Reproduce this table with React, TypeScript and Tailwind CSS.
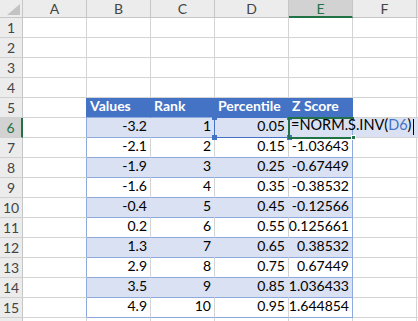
import React from "react";

const cols = ["A", "B", "C", "D", "E", "F", ""];
const colW = ["w-[64px]", "w-[64px]", "w-[64px]", "w-[74px]", "w-[64px]", "w-[64px]", "w-[64px]"];

const rows = [
  ["-3.2", "1", "0.05", ""],
  ["-2.1", "2", "0.15", "-1.03643"],
  ["-1.9", "3", "0.25", "-0.67449"],
  ["-1.6", "4", "0.35", "-0.38532"],
  ["-0.4", "5", "0.45", "-0.12566"],
  ["0.2", "6", "0.55", "0.125661"],
  ["1.3", "7", "0.65", "0.38532"],
  ["2.9", "8", "0.75", "0.67449"],
  ["3.5", "9", "0.85", "1.036433"],
  ["4.9", "10", "0.95", "1.644854"],
];

const headers = ["Values", "Rank", "Percentile", "Z Score"];

function RowHead({ n, active }: { n?: number; active?: boolean }) {
  return (
    <div
      className={
        "w-[23px] h-full shrink-0 flex items-center justify-center border-b border-[#d0d0d0] " +
        (active
          ? "bg-[#d2d2d2] text-[#217346] border-r-2 border-r-[#217346]"
          : "bg-[#ececec] text-[#444] border-r border-r-[#c6c6c6]")
      }
    >
      {n}
    </div>
  );
}

function Cell({
  w,
  cls,
  children,
  right,
}: {
  w: string;
  cls: string;
  children?: React.ReactNode;
  right?: boolean;
}) {
  return (
    <div
      className={
        w +
        " h-full shrink-0 border-r border-b flex items-end pb-[1px] px-[3px] " +
        (right ? "justify-end " : "justify-start ") +
        cls
      }
    >
      {children}
    </div>
  );
}

export default function App() {
  return (
    <div
      className="relative w-[418px] h-[321px] overflow-hidden bg-white text-[14px] text-black"
      style={{ fontFamily: "Lato, 'Liberation Sans', sans-serif" }}
    >
      {/* column headers */}
      <div className="flex h-[18px]">
        <div className="relative w-[23px] shrink-0 bg-[#ececec] border-r border-b border-[#c6c6c6]">
          <svg className="absolute right-[2px] bottom-[2px]" width="13" height="11" viewBox="0 0 13 11">
            <polygon points="13,0 13,11 0,11" fill="#c3c3c3" />
          </svg>
        </div>
        {cols.map((c, i) => (
          <div
            key={i}
            className={
              colW[i] +
              " shrink-0 flex items-center justify-center border-r border-r-[#c6c6c6] " +
              (c === "E"
                ? "bg-[#d2d2d2] text-[#217346] border-b-2 border-b-[#217346]"
                : "bg-[#ececec] text-[#444] border-b border-b-[#c6c6c6]")
            }
          >
            {c}
          </div>
        ))}
      </div>

      {/* rows 1-4 */}
      {[1, 2, 3, 4].map((n) => (
        <div key={n} className="flex h-[20px]">
          <RowHead n={n} />
          {cols.map((c, i) => (
            <Cell key={i} w={colW[i]} cls="border-[#d4d4d4]" />
          ))}
        </div>
      ))}

      {/* row 5: table header */}
      <div className="flex h-[20px]">
        <RowHead n={5} />
        <Cell w={colW[0]} cls="border-b-[#d4d4d4] border-r-[#4472c4]" />
        {headers.map((h, i) => (
          <Cell
            key={h}
            w={colW[i + 1]}
            cls="bg-[#4472c4] text-white font-bold border-[#4472c4] border-b-[#8ea9db]"
          >
            {h}
          </Cell>
        ))}
        <Cell w={colW[5]} cls="border-[#d4d4d4]" />
        <Cell w={colW[6]} cls="border-[#d4d4d4]" />
      </div>

      {/* rows 6-15 */}
      {rows.map((r, idx) => {
        const n = idx + 6;
        const band = idx % 2 === 0;
        const fill = band ? "bg-[#d9e1f2] border-r-[#d9e1f2]" : "bg-white border-r-[#d4d4d4]";
        const editRow = n === 6 ? "bg-[#d9e1f2] border-[#d9e1f2] border-b-[#d4d4d4]" : "border-[#d4d4d4]";
        return (
          <div key={n} className="flex h-[20px]">
            <RowHead n={n} active={n === 6} />
            <Cell w={colW[0]} cls="border-b-[#d4d4d4] border-r-[#8ea9db]" />
            {r.map((v, i) => (
              <Cell
                key={i}
                w={colW[i + 1]}
                right
                cls={fill + " border-b-[#8ea9db] " + (i === 3 ? "!border-r-[#8ea9db]" : "")}
              >
                {v}
              </Cell>
            ))}
            <Cell w={colW[5]} cls={editRow} />
            <Cell w={colW[6]} cls={editRow} />
          </div>
        );
      })}

      {/* row 16, only its top edge shows */}
      <div className="flex h-[20px]">
        <RowHead />
        {cols.map((c, i) => (
          <Cell key={i} w={colW[i]} cls="border-[#d4d4d4]" />
        ))}
      </div>

      {/* D6 formula reference highlight */}
      <div className="absolute left-[214px] top-[117px] w-[76px] h-[21px] border border-[#4472c4] pointer-events-none">
        <div className="absolute -left-[3px] -top-[3px] w-[5px] h-[5px] bg-[#4472c4]" />
        <div className="absolute -right-[3px] -top-[3px] w-[5px] h-[5px] bg-[#4472c4]" />
        <div className="absolute -left-[3px] -bottom-[3px] w-[5px] h-[5px] bg-[#4472c4]" />
        <div className="absolute -right-[3px] -bottom-[3px] w-[5px] h-[5px] bg-[#4472c4]" />
      </div>

      {/* E6 active cell in edit mode */}
      <div className="absolute left-[288px] top-[117px] w-[66px] h-[22px] border-t-2 border-b-2 border-l-2 border-[#217346] pointer-events-none" />
      <div className="absolute left-[351px] top-[135px] w-[5px] h-[5px] bg-[#217346] border border-white" />
      <div className="absolute left-[291px] top-[119px] h-[18px] flex items-end pb-[1px] whitespace-nowrap text-[14.5px]">
        <span>=NORM.S.INV(</span>
        <span className="text-[#4472c4]">D6</span>
        <span>)</span>
        <span className="ml-[2px] w-px h-[16px] bg-black mb-[1px]" />
      </div>
    </div>
  );
}
